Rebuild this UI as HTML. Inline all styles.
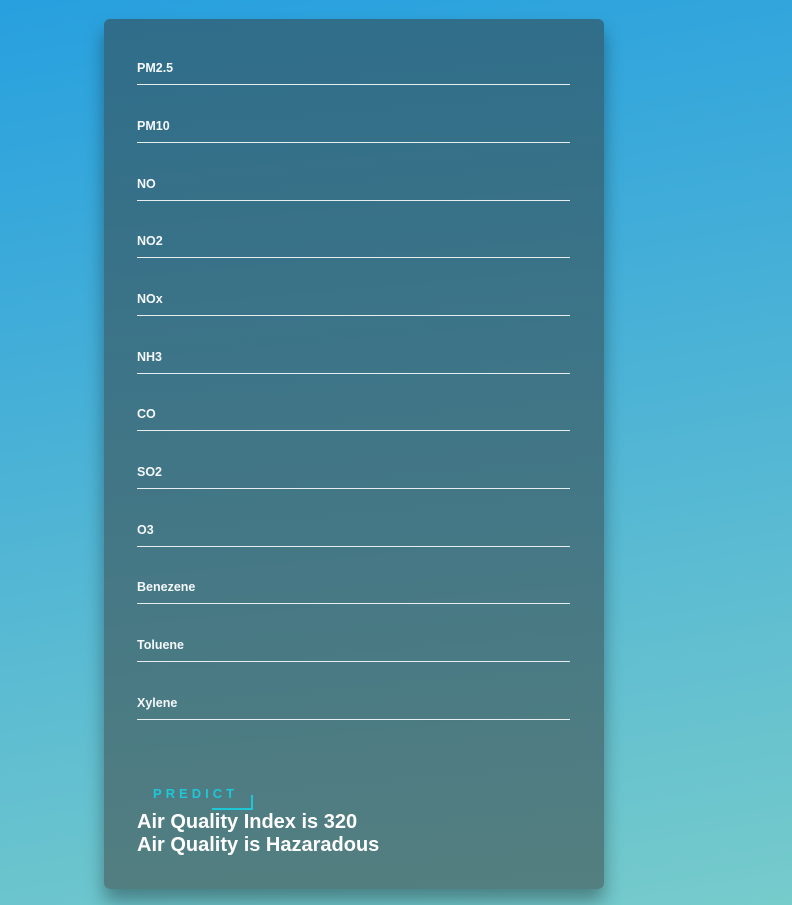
<!DOCTYPE html>
<html><head><style>
html,body{margin:0;padding:0}
body{width:792px;height:905px;overflow:hidden;background:linear-gradient(170deg,#27a0df 0%,#4bb2d6 45%,#76cbcb 100%);font-family:"Liberation Sans",sans-serif;position:relative}
.card{position:absolute;left:104px;top:19px;width:500px;height:870px;border-radius:6px;background:linear-gradient(175deg,#2f6d8a 0%,#437786 55%,#547f80 100%);box-shadow:0 12px 18px rgba(0,0,0,.35)}
.f{position:absolute;left:33px;width:433px;border-bottom:1.5px solid #e6eef0;height:20px}
.f span{position:absolute;left:0;top:-3px;font-size:12.5px;color:#f4f8fa;font-weight:600}
.pr{position:absolute;left:49px;top:767px;font-size:13px;letter-spacing:4px;color:#1fc6d6;font-weight:bold}
.ul{position:absolute;left:108px;top:776px;width:39px;height:13px;border-right:2px solid #1fc6d6;border-bottom:2px solid #1fc6d6}
.res{position:absolute;left:33px;top:792px;font-size:20px;font-weight:bold;color:#fff;line-height:23px}
</style></head><body>
<div class="card">
<div class="f" style="top:45px"><span>PM2.5</span></div>
<div class="f" style="top:103px"><span>PM10</span></div>
<div class="f" style="top:161px"><span>NO</span></div>
<div class="f" style="top:218px"><span>NO2</span></div>
<div class="f" style="top:276px"><span>NOx</span></div>
<div class="f" style="top:334px"><span>NH3</span></div>
<div class="f" style="top:391px"><span>CO</span></div>
<div class="f" style="top:449px"><span>SO2</span></div>
<div class="f" style="top:507px"><span>O3</span></div>
<div class="f" style="top:564px"><span>Benezene</span></div>
<div class="f" style="top:622px"><span>Toluene</span></div>
<div class="f" style="top:680px"><span>Xylene</span></div>
<div class="pr">PREDICT</div>
<div class="ul"></div>
<div class="res">Air Quality Index is 320<br>Air Quality is Hazaradous</div>
</div>
</body></html>
